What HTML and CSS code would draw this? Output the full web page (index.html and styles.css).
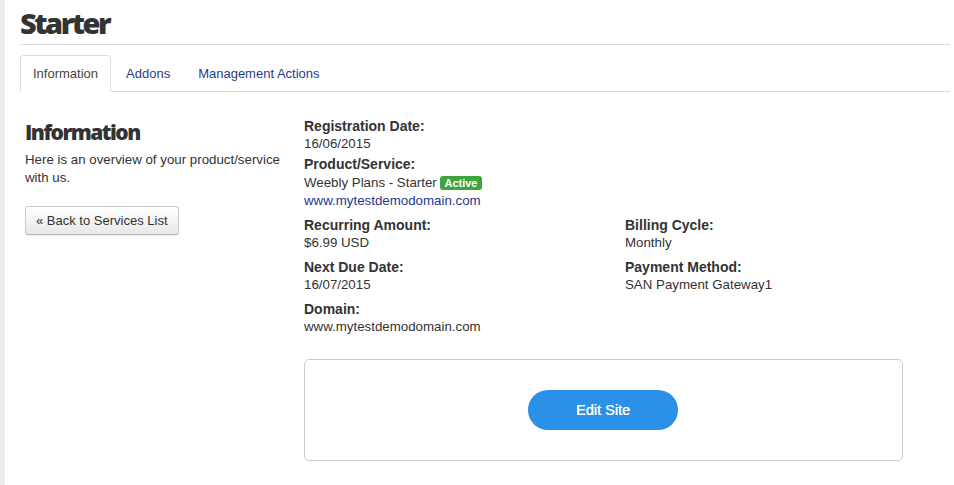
FILE: index.html
```html
<!DOCTYPE html>
<html>
<head>
<meta charset="utf-8">
<link rel="stylesheet" href="styles.css">
</head>
<body>
<div class="page">
  <h1 class="title">Starter</h1>
  <ul class="tabs">
    <li class="tab active">Information</li>
    <li class="tab">Addons</li>
    <li class="tab">Management Actions</li>
  </ul>
  <div class="content">
    <div class="side">
      <h2 class="side-title">Information</h2>
      <p class="side-text">Here is an overview of your product/service with us.</p>
      <button class="back-btn">« Back to Services List</button>
    </div>
    <div class="details">
      <div class="field first">
        <div class="label">Registration Date:</div>
        <div class="value">16/06/2015</div>
      </div>
      <div class="field second">
        <div class="label">Product/Service:</div>
        <div class="value prod">Weebly Plans - Starter <span class="badge">Active</span></div>
        <div class="value"><a class="link" href="#">www.mytestdemodomain.com</a></div>
      </div>
      <div class="grid">
        <div class="field">
          <div class="label">Recurring Amount:</div>
          <div class="value">$6.99 USD</div>
        </div>
        <div class="field">
          <div class="label">Billing Cycle:</div>
          <div class="value">Monthly</div>
        </div>
        <div class="field">
          <div class="label">Next Due Date:</div>
          <div class="value">16/07/2015</div>
        </div>
        <div class="field">
          <div class="label">Payment Method:</div>
          <div class="value">SAN Payment Gateway1</div>
        </div>
        <div class="field">
          <div class="label">Domain:</div>
          <div class="value">www.mytestdemodomain.com</div>
        </div>
      </div>
      <div class="panel">
        <button class="edit-btn">Edit Site</button>
      </div>
    </div>
  </div>
</div>
</body>
</html>
```
FILE: styles.css
```css
html, body {
  margin: 0;
  padding: 0;
  background: #fff;
}
body {
  font-family: "Liberation Sans", Arial, sans-serif;
  font-size: 13.3px;
  color: #333;
  border-left: 5px solid #ededed;
  min-height: 485px;
  box-sizing: border-box;
}
.page {
  padding: 0 4px 0 15px;
}
.title {
  margin: 0;
  padding-top: 5px;
  height: 45px;
  box-sizing: border-box;
  font-family: "Open Sans", sans-serif;
  font-weight: 800;
  font-size: 29px;
  line-height: 36px;
  letter-spacing: -2.5px;
  color: #333;
  border-bottom: 1px solid #ddd;
}
.tabs {
  list-style: none;
  margin: 10px 0 0 0;
  padding: 0;
  display: flex;
  border-bottom: 1px solid #ddd;
}
.tab {
  padding: 0 12px;
  height: 35px;
  line-height: 35px;
  margin-right: 2px;
  margin-bottom: -1px;
  color: #1f3d8c;
  font-size: 13px;
  border: 1px solid transparent;
  border-radius: 4px 4px 0 0;
}
.tab.active {
  color: #444;
  border-color: #ddd;
  border-bottom-color: #fff;
  background: #fff;
}
.content {
  display: flex;
  padding-top: 26px;
}
.side {
  width: 284px;
  padding-left: 5px;
  box-sizing: border-box;
}
.side-title {
  margin: 0;
  padding-top: 1px;
  font-family: "Open Sans", sans-serif;
  font-weight: 800;
  font-size: 21px;
  line-height: 26px;
  letter-spacing: -1.5px;
  color: #333;
}
.side-text {
  margin: 6px 0 0 0;
  line-height: 18px;
  width: 260px;
}
.back-btn {
  margin-top: 19px;
  height: 29px;
  padding: 0 10px;
  font-family: "Liberation Sans", Arial, sans-serif;
  font-size: 13px;
  color: #333;
  border: 1px solid #ccc;
  border-bottom-color: #b8b8b8;
  border-radius: 3px;
  background: linear-gradient(#fff, #e8e8e8);
  box-shadow: 0 1px 1px rgba(0,0,0,0.08);
}
.details {
  flex: 1;
}
.field .label {
  font-weight: bold;
  line-height: 17px;
  font-size: 14px;
}
.field .value {
  line-height: 17px;
}
.field .value.prod {
  line-height: 19px;
}
.first {
  margin-bottom: 4px;
}
.second {
  margin-bottom: 8px;
}
.grid {
  display: grid;
  grid-template-columns: 321px 1fr;
  row-gap: 8px;
}
.link {
  color: #1a3a8f;
  text-decoration: none;
}
.badge {
  display: inline-block;
  background: #3ea53e;
  color: #fff;
  font-weight: bold;
  font-size: 11px;
  line-height: 14px;
  padding: 0 4px;
  border-radius: 3px;
  vertical-align: 0;
}
.panel {
  margin-top: 24px;
  width: 599px;
  height: 102px;
  box-sizing: border-box;
  border: 1px solid #ccc;
  border-radius: 5px;
  display: flex;
  justify-content: center;
  padding-top: 30px;
  padding-right: 1px;
}
.edit-btn {
  width: 150px;
  height: 40px;
  border: none;
  border-radius: 20px;
  background: #2b90e7;
  color: #fff;
  font-family: "Liberation Sans", Arial, sans-serif;
  font-size: 14.5px;
  text-shadow: 0.3px 0 0 #fff;
}
```
